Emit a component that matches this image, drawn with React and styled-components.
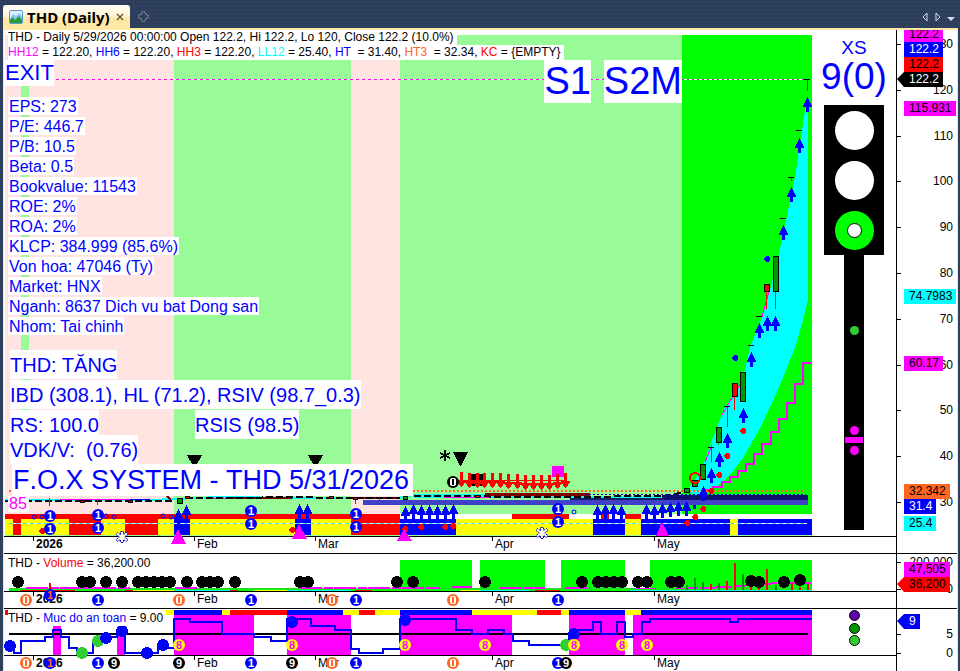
import React from 'react'
import styled, { createGlobalStyle } from 'styled-components';

const GlobalStyle = createGlobalStyle`
    *{
        box-sizing:border-box;
    }
    body{
        margin:0;
        background:#2d3e5c;
        font-family:"Liberation Sans", Arial, sans-serif;
        font-size:12px;
        color:black;
    }
`;

const Window = styled.div`
    display:flex;
    flex-direction:column;
    min-height:100vh;
    background-color:#2d3e5c;
    background-image:radial-gradient(#32445f 1px, transparent 1px);
    background-size:4px 4px;
`;

const TabBar = styled.header`
    display:flex;
    align-items:flex-end;
    justify-content:space-between;
    height:28px;
    padding:0 3px;
`;

const TabGroup = styled.div`
    display:flex;
    align-items:center;
    gap:${p => p.$gap || 0}px;
`;

const Tab = styled.div`
    display:flex;
    align-items:center;
    height:23px;
    padding:0 5px 0 6px;
    border-radius:3px 3px 0 0;
    background:linear-gradient(#fffdf8, #fff3d0 50%, #ffe8a6 52%);
    .name{
        margin-left:4px;
        font:bold 15px/22px "Noto Sans", sans-serif;
    }
`;

const IconButton = styled.button`
    display:flex;
    align-items:center;
    justify-content:center;
    width:13px;
    height:22px;
    padding:0;
    border:0;
    background:none;
    cursor:pointer;
`;

const CloseButton = styled(IconButton)`
    width:10px;
    margin-left:5px;
`;

const Document = styled.main`
    flex:1;
    margin-right:2px;
    margin-left:3px;
    border:solid #ffe8a6;
    border-width:2px 1px 0;
    background:white;
`;

const Pane = styled.section`
    display:grid;
    grid-template-columns:minmax(0, 1fr) 60px;
    border-bottom:${p => p.$last ? 0 : '1px solid black'};
    overflow:hidden;
`;

const PlotColumn = styled.div`
    position:relative;
    border-right:1px solid black;
`;

const PlotRow = styled.div`
    display:grid;
    grid-template-columns:minmax(0, 1fr) 84px;
    height:${p => p.$height}px;
`;

const Drawing = styled.svg`
    position:relative;
    z-index:1;
    display:block;
    width:100%;
    height:100%;
    overflow:visible;
    shape-rendering:crispEdges;
`;

const Side = styled.div`
    display:flex;
    flex-direction:column;
    align-items:center;
    color:blue;
    .rating{
        margin-top:7px;
        font-size:19px;
        line-height:22px;
    }
    .score{
        font-size:37px;
        line-height:36px;
    }
    .light{
        margin-top:10px;
    }
`;

const Months = styled.div`
    display:grid;
    grid-template-columns:161px 121px 177px 162px auto;
    height:17px;
    padding-left:29px;
    border-top:1px solid black;
    line-height:14px;
    span{
        position:relative;
        padding-left:3px;
    }
    span:first-child{
        font-weight:bold;
    }
    span::before{
        content:"";
        position:absolute;
        left:0;
        top:0;
        width:1px;
        height:4px;
        background:black;
    }
`;

const Overlay = styled.div`
    position:absolute;
    z-index:2;
    top:${p => p.$top || 0}px;
    left:4px;
    display:flex;
    flex-direction:column;
    align-items:flex-start;
    color:blue;
    white-space:pre;
`;

const TitleLine = styled.div`
    padding-right:3px;
    background:white;
    color:black;
    line-height:15px;
`;

const Ink = styled.span`
    color:${p => p.$color};
`;

const Exit = styled.div`
    margin-left:-3px;
    background:white;
    font-size:22px;
    line-height:26px;
`;

const Facts = styled.ul`
    display:flex;
    flex-direction:column;
    align-items:flex-start;
    gap:2px;
    margin:11px 0 15px;
    padding:0;
    list-style:none;
    font-size:16px;
    line-height:17px;
    li{
        padding:1px 1px 0;
        background:white;
    }
`;

const Ratings = styled.div`
    display:grid;
    grid-template-columns:185px auto;
    row-gap:1px;
    margin-left:2px;
    font-size:20px;
    line-height:27px;
`;

const Rating = styled.div`
    grid-column:${p => p.$wide ? '1 / 3' : 'auto'};
    justify-self:start;
    margin-top:${p => p.$tight ? -5 : 0}px;
    padding-top:2px;
    background:white;
`;

const SystemName = styled.div`
    margin-left:4px;
    padding:0 4px 0 1px;
    background:white;
    font-size:27px;
    font-kerning:none;
    line-height:32px;
`;

const Rank = styled.div`
    padding:0 2px 0 1px;
    background:white;
    color:magenta;
    font-size:16px;
    line-height:16px;
`;

const Signals = styled.div`
    position:absolute;
    z-index:2;
    top:30px;
    right:214px;
    display:flex;
    gap:13px;
    color:blue;
    font-size:38px;
    line-height:43px;
    span{
        background:white;
    }
`;

const Scale = styled.div`
    position:relative;
`;

const ScaleLabels = styled.div`
    display:flex;
    flex-direction:column;
    justify-content:space-between;
    margin-top:${p => p.$top}px;
    height:${p => p.$height}px;
    padding-right:4px;
    text-align:right;
    line-height:14px;
    span{
        position:relative;
    }
    span::before{
        content:"";
        position:absolute;
        left:0;
        top:7px;
        width:4px;
        height:1px;
        background:black;
    }
`;

const Tag = styled.span`
    position:absolute;
    left:7px;
    height:15px;
    padding:0 4px 0 5px;
    background:${p => p.$bg};
    color:${p => p.$color || 'black'};
    line-height:15px;
    &::before{
        content:"";
        display:${p => p.$pointer ? 'block' : 'none'};
        position:absolute;
        right:100%;
        top:0;
        border:solid transparent;
        border-width:7px 7px 8px 0;
        border-right-color:${p => p.$bg};
    }
`;

const LIME = '#00ff00';
const PALE = '#98fb98';
const PINK = '#ffe4e1';
const GREEN = '#009600';
const LIMEGREEN = '#32cd32';
const ORANGE = '#ff6622';

// [x1, x2, colour]
const backdrop = [
    [5, 174, PINK], [174, 351, PALE], [351, 400, PINK], [400, 682, PALE], [682, 812, LIME],
];
const trendStrip = [[5, 400, 'red'], [400, 512, 'white'], [512, 569, 'red'], [601, 609, 'red'], [625, 641, 'red']];
const phaseStrip = [
    [5, 13, 'yellow'], [13, 21, 'red'], [21, 69, 'yellow'], [69, 101, 'red'], [101, 125, 'yellow'],
    [125, 158, 'red'], [158, 174, 'yellow'], [174, 190, 'blue'], [190, 295, 'yellow'], [295, 311, 'blue'],
    [311, 351, 'yellow'], [351, 400, 'red'], [400, 456, 'blue'], [456, 593, 'yellow'], [593, 625, 'blue'],
    [625, 641, 'yellow'], [641, 730, 'blue'], [730, 738, 'yellow'], [738, 812, 'blue'],
];
const safetyStrip = [
    [5, 8, 'red'], [164, 174, 'yellow'], [174, 222, 'blue'], [222, 230, 'yellow'], [230, 287, 'red'],
    [287, 343, 'blue'], [343, 359, 'yellow'], [359, 375, 'red'], [375, 400, 'yellow'], [400, 472, 'blue'],
    [472, 537, 'yellow'], [537, 561, 'red'], [561, 569, 'yellow'], [569, 625, 'blue'], [625, 641, 'yellow'],
    [641, 812, 'blue'],
];
const safetyZones = [[174, 254, 'magenta'], [287, 351, 'magenta'], [400, 512, 'magenta'], [569, 625, 'magenta'], [633, 812, 'magenta']];
const volumeZones = [[400, 472, LIME], [480, 545, LIME], [561, 625, LIME], [650, 812, LIME]];

// [x, open/close top, bottom, wick bottom, colour]
const candles = [
    [776, 256, 292, 309, GREEN], [767, 284, 292, 309, 'red'], [743, 372, 402, 402, GREEN],
    [735, 383, 397, 410, 'red'], [719, 427, 443, 445, GREEN], [703, 464, 480, 480, GREEN],
    [695, 480, 487, 487, GREEN], [687, 488, 493, 493, GREEN],
];
// [x, y, wick bottom]
const flatBars = [
    [807, 79, 90], [799, 130, 130], [791, 177, 180], [783, 218, 218], [759, 316, 316],
    [751, 345, 345], [727, 406, 426], [711, 447, 461],
];
const buyArrows = [
    [807, 97], [799, 138], [791, 187], [783, 225], [775, 316], [767, 316], [759, 323], [751, 352],
    [743, 408], [727, 433], [719, 452], [711, 468], [703, 486], [605, 504], [613, 504], [621, 505],
    [597, 505], [646, 504], [654, 505], [662, 503], [670, 502], [678, 501], [686, 501],
    [405, 506], [413, 504], [421, 505], [429, 505], [437, 505], [445, 505], [453, 504],
    [178, 509], [186, 505], [299, 504], [307, 504],
];
const sellArrows = [
    [461, 472], [469, 473], [477, 473], [484, 473], [492, 473], [500, 473], [508, 474], [517, 474],
    [525, 475], [533, 475], [541, 475], [549, 475], [557, 474], [565, 473],
];
const warnings = [
    [743, 431], [727, 456], [719, 475], [711, 491], [703, 509], [695, 517], [687, 523],
    [42, 531], [292, 530], [405, 529], [421, 527], [445, 527], [453, 526],
];
const ringDots = [[34, 517], [42, 517], [106, 516], [114, 517], [163, 516], [171, 517]];
const priceOnes = [
    [50, 516], [50, 529], [98, 515], [98, 528], [251, 511], [251, 524], [356, 514], [356, 527],
    [558, 509], [558, 522],
];

const volumeDots = [
    18, 82, 90, 106, 122, 138, 146, 154, 162, 170, 187, 202, 210, 218, 235, 300, 308, 397, 413,
    485, 582, 598, 606, 614, 622, 638, 647, 671, 679,
].map(x => [x, 582]).concat([[751, 581], [759, 582], [784, 582], [800, 580]]);
const volumeBars = [
    [50, 583, 'red'], [687, 585, GREEN], [695, 578, GREEN], [703, 582, GREEN], [711, 584, 'red'],
    [719, 583, GREEN], [727, 581, 'red'], [735, 563, 'red'], [743, 574, GREEN], [751, 587, 'red'],
    [759, 588, 'red'], [767, 569, 'red'], [776, 585, GREEN], [792, 583, 'red'], [800, 587, 'red'],
    [808, 584, 'red'],
];

const safetyLine = 'M10 645H14V653H21V641H45V637H53V630H61V637H69V648H77V653H93V641H98V637H117V630H125V653H158V645H166V648H174V619H190V622H222V634H254V637H271V641H287V619H311V626H335V630H351V649H359V653H383V649H400V619H456V630H472V634H488V630H504V634H513V641H529V645H569V634H577V630H593V622H601V634H617V622H625V637H633V634H642V622H650V619H730V622H738V619H812';

function Strip({ parts, y, height }) {
    return parts.map(([x1, x2, color]) => (
        <rect key={x1} x={x1} y={y} width={x2 - x1} height={height} fill={color} />
    ));
}

function Arrow({ x, y }) {
    return <path d={`M${x} ${y}h1v2h1v2h1v2h1v2h1v2h-3v5h-3v-5h-3v-2h1v-2h1v-2h1v-2h1z`} fill="blue" />;
}

function SellArrow({ x, y }) {
    return <path d={`M${x - 1} ${y}h3v8h3v1l-4 6h-1l-4 -6v-1h3z`} fill="red" />;
}

function Diamond({ x, y, color = 'red' }) {
    return <path d={`M${x - 1} ${y - 3}h2l2 2v2l-2 2h-2l-2 -2v-2z`} fill={color} />;
}

function Badge({ x, y, fill = 'blue', color = 'white', children }) {
    return (
        <g shapeRendering="auto">
            <circle cx={x} cy={y} r="6" fill={fill} />
            <text x={x} y={y + 4} fill={color} fontSize="11" fontWeight="bold" textAnchor="middle">{children}</text>
        </g>
    );
}

function ZeroBadge({ x, y, color = ORANGE }) {
    return (
        <g shapeRendering="auto">
            <circle cx={x} cy={y} r="6" fill={color} />
            <rect x={x - 3} y={y - 4} width="6" height="8" rx="2" fill="white" />
            <rect x={x - 1} y={y - 3} width="2" height="6" fill={color} />
        </g>
    );
}

function Flower({ x, y }) {
    return (
        <g transform={`translate(${x} ${y})`} fill="#fffff0" stroke="#0000d0" strokeWidth="1" strokeDasharray="2 1" shapeRendering="auto">
            <path d="M-1.5 -2.500V-5.500H1.500V-2.500L4.500 -4.500L6 -2.500L3 -0.500V0.500L6 2.500L4.500 4.500L1.500 2.500V5.500H-1.500V2.500L-4.500 4.500L-6 2.500L-3 0.500V-0.500L-6 -2.500L-4.500 -4.500Z" />
        </g>
    );
}

function MonthAxis() {
    return (
        <Months>
            <span>2026</span>
            <span>Feb</span>
            <span>Mar</span>
            <span>Apr</span>
            <span>May</span>
        </Months>
    );
}

function PriceDrawing() {
    return (
        <Drawing aria-label="Price chart">
            <g transform="translate(-4 -30)">
                <Strip parts={backdrop} y={35} height={479} />
                <rect x="21" y="35" width="8" height="461" fill={PALE} />
                <Strip parts={trendStrip} y={514} height={5} />
                <Strip parts={phaseStrip} y={519} height={16} />
                <rect x="5" y="535" width="807" height="1" fill={PALE} />
                <path d="M9 523.5H807" stroke="white" />
                <path d="M9 523.5H807" stroke="#40e0e0" strokeDasharray="4 3" />
                <path d="M56 79.5H808" stroke="white" />
                <path d="M56 79.5H682" stroke="magenta" strokeDasharray="3 3" />
                <path d="M682 79.5H808" stroke="#b04060" strokeDasharray="2 3" />

                <path d="M685 492L695 480L705 460L717 427L725 407L738 387L745 370L750 347L762 317L770 290L782 240L786 220L795 177L802 130L807 98H808V300L803 320L796 345L782 380L772 403L759 430L743 458L730 475L715 488L700 496Z" fill="cyan" />
                <path d="M705 462L712 445M722 415L740 384M762 317L770 288" stroke="magenta" />
                <path d="M705 490H713V487H722V482H730V477H738V471H746V464H754V454H762V444H771V432H779V419H787V403H795V384H803V363H812" fill="none" stroke="magenta" strokeWidth="2" />

                <path d="M5 500H150L174 499L220 497L300 498H400L414 495" fill="none" stroke="cyan" strokeWidth="2" />
                <path d="M414 494H460L590 496H662V498H414Z" fill="cyan" />
                <path d="M60 499.5H150M212 498.5H290M444 497.5H490" stroke="magenta" />
                <path d="M167 496l4 4M230 498H292M363 498H397" stroke="#800000" strokeWidth="2" />
                <rect x="485" y="493" width="105" height="3" fill="#800000" />
                <path d="M5 501H174M186 498.5L300 497L330 498H400M414 496L560 497L662 496L686 492" fill="none" stroke="black" strokeWidth="2" strokeDasharray="7 3" />
                <path d="M5 500.5H16M130 499.5H150" stroke="blue" />
                <path d="M49.5 498V506M97.5 499V505M355.5 498V504M379.5 498V502" stroke="red" />
                {[[80, 500, 'red'], [128, 500, 'red'], [185, 496, 'red'], [329, 496, 'red'], [353, 497, 'red'], [475, 495, 'red']].map(([x, y, c]) => (
                    <rect key={x} x={x + 0.5} y={y + 0.5} width="4" height="2" fill={c} stroke="black" />
                ))}
                <rect x="177" y="498" width="5" height="5" fill={GREEN} stroke="black" />
                <rect x="403" y="496" width="4" height="3" fill={GREEN} stroke="black" />
                <path d="M413 491H806" stroke={ORANGE} strokeWidth="2" strokeDasharray="2 2" />
                <path d="M585 494.5H806" stroke="blue" strokeWidth="1" strokeDasharray="2 2" />
                <rect x="662" y="495" width="146" height="5" fill="#101070" />
                <rect x="570" y="498" width="92" height="2" fill="#102060" />
                <rect x="363" y="500" width="445" height="5" fill="#4040c8" />
                <rect x="9" y="490" width="2" height="2" fill={ORANGE} />

                {flatBars.map(([x, y, low]) => (
                    <g key={x}>
                        <rect x={x} y={y} width="1" height={low - y + 1} fill="red" />
                        <rect x={x - 3} y={y} width="6" height="1" fill="black" />
                    </g>
                ))}
                {candles.map(([x, top, bottom, low, color]) => (
                    <g key={x}>
                        <rect x={x - 1} y={bottom} width="1" height={low - bottom} fill={color} />
                        <rect x={x - 3} y={top} width="6" height={bottom - top} fill="black" />
                        <rect x={x - 2} y={top + 1} width="4" height={bottom - top - 2} fill={color} />
                    </g>
                ))}
                <circle cx="695" cy="478" r="5" fill="none" stroke="red" strokeWidth="2" />
                {buyArrows.map(([x, y]) => <Arrow key={x} x={x} y={y} />)}
                <rect x="693" y="505" width="3" height="4" fill="blue" />
                <Diamond x={767} y={259} color="blue" />
                <Diamond x={735} y={358} color="blue" />
                {warnings.map(([x, y]) => <Diamond key={x} x={x} y={y} />)}
                {ringDots.map(([x, y]) => (
                    <circle key={x} cx={x} cy={y} r="2" fill="red" stroke="blue" shapeRendering="auto" />
                ))}
                <circle cx="574" cy="512" r="2" fill="none" stroke="blue" shapeRendering="auto" />

                <path d="M187 455H202L196 466H193Z M308 455H323L317 466H314Z M453 452H468L461 466H460Z" fill="black" />
                <path d="M445 450v11M440 453l10 5M440 458l10 -5" stroke="black" strokeWidth="2" />
                <rect x="471" y="474" width="12" height="12" fill="black" />
                <rect x="552" y="466" width="12" height="11" fill="magenta" />
                <path d="M461 480H565" stroke="red" />
                {sellArrows.map(([x, y]) => <SellArrow key={x} x={x} y={y} />)}
                <ZeroBadge x={453} y={482} color="black" />

                {priceOnes.map(([x, y]) => <Badge key={`${x}-${y}`} x={x} y={y}>1</Badge>)}
                <path d="M178 529L186 544H171Z M299 524L307 539H292Z M404 529L412 541H397Z M662 522L669 536H656Z" fill="magenta" />
                <Flower x={122} y={537} />
                <Flower x={542} y={533} />
            </g>
        </Drawing>
    );
}

function TrafficLight() {
    return (
        <svg className="light" width="60" height="425" aria-label="Signal light">
            <rect width="60" height="150" fill="black" />
            <rect x="20" y="150" width="20" height="275" fill="black" />
            <circle cx="30.5" cy="25.5" r="19.5" fill="white" />
            <circle cx="30.5" cy="75.5" r="19.5" fill="white" />
            <circle cx="30.5" cy="125.5" r="19.5" fill={LIME} />
            <circle cx="30.5" cy="125.5" r="7" fill="white" stroke="black" />
            <circle cx="30.5" cy="225.5" r="4.5" fill={LIMEGREEN} />
            <circle cx="30.5" cy="325.5" r="4.5" fill="magenta" />
            <rect x="21" y="332" width="18" height="6" fill="magenta" />
            <circle cx="30.5" cy="345.5" r="4.5" fill="magenta" />
        </svg>
    );
}

function VolumeDrawing() {
    return (
        <Drawing aria-label="Volume chart">
            <g transform="translate(-4 -554)">
                <Strip parts={volumeZones} y={560} height={31} />
                <path d="M9 588.5H812" stroke={LIMEGREEN} />
                <path d="M26 588H130M175 588H200M300 588H440M452 587H472M500 588H545M565 588H590M636 589H656M676 589L700 588L730 587L762 584L780 583H812" fill="none" stroke="magenta" strokeWidth="2" strokeDasharray="22 2 9 1" />
                <path d="M9 590H812" stroke={LIME} strokeWidth="2" />
                <path d="M20 590H75M125 590H133M230 590H238M355 590H372M535 590H560" stroke="red" />
                <path d="M133 590H174M254 590H287M460 590H480" stroke="yellow" />
                <path d="M174 590H230M287 590H350M480 590H530M630 590H812" stroke="cyan" />
                {volumeBars.map(([x, y, color]) => (
                    <rect key={x} x={x - 1} y={y} width="2" height={590 - y} fill={color} />
                ))}
                {volumeDots.map(([x, y]) => <circle key={x} cx={x} cy={y} r="6" fill="black" />)}
                {[26, 179, 332, 453].map(x => <ZeroBadge key={x} x={x} y={600} />)}
                {[98, 251, 356, 558].map(x => <Badge key={x} x={x} y={600}>1</Badge>)}
                <Badge x={50} y={595} color={ORANGE}>1</Badge>
            </g>
        </Drawing>
    );
}

function SafetyDrawing() {
    return (
        <Drawing aria-label="Safety chart">
            <g transform="translate(-4 -609)">
                <Strip parts={safetyStrip} y={610} height={5} />
                <Strip parts={safetyZones} y={615} height={40} />
                <rect x="53" y="625" width="8" height="30" fill="magenta" />
                <rect x="117" y="632" width="8" height="23" fill="magenta" />
                <path d="M9 634H808" stroke="black" strokeWidth="2" />
                <path d={safetyLine} fill="none" stroke="#0000f0" strokeWidth="2" />
                {[[82, 653], [98, 641], [566, 645]].map(([x, y]) => (
                    <circle key={x} cx={x} cy={y} r="6" fill={LIMEGREEN} />
                ))}
                {[[10, 646], [106, 638], [122, 631], [147, 653], [163, 645], [292, 622], [405, 620], [574, 634]].map(([x, y]) => (
                    <circle key={x} cx={x} cy={y} r="6" fill="blue" />
                ))}
                {[179, 292, 405, 485, 574, 622, 647].map(x => (
                    <Badge key={x} x={x} y={645} fill="yellow" color="magenta">8</Badge>
                ))}
                {[26, 332, 453].map(x => <ZeroBadge key={x} x={x} y={663} />)}
                {[98, 251, 356, 558].map(x => <Badge key={x} x={x} y={663}>1</Badge>)}
                <Badge x={50} y={663} color={ORANGE}>1</Badge>
                {[114, 179, 292, 566].map(x => <Badge key={x} x={x} y={663} fill="black">9</Badge>)}
            </g>
        </Drawing>
    );
}

function SafetyLights() {
    return (
        <svg width="12" height="40" aria-label="Safety lights">
            <circle cx="6.5" cy="6.5" r="5" fill="#6000a8" stroke="black" />
            <circle cx="6.5" cy="19.5" r="5" fill={GREEN} stroke="black" />
            <circle cx="6.5" cy="31.5" r="5" fill={LIMEGREEN} stroke="black" />
        </svg>
    );
}

const facts = [
    'EPS: 273', 'P/E: 446.7', 'P/B: 10.5', 'Beta: 0.5', 'Bookvalue: 11543', 'ROE: 2%', 'ROA: 2%',
    'KLCP: 384.999 (85.6%)', 'Von hoa: 47046 (Ty)', 'Market: HNX', 'Nganh: 8637 Dich vu bat Dong san',
    'Nhom: Tai chinh',
];

const priceTags = [
    { text: '122.2', top: -3, bg: 'magenta' },
    { text: '122.2', top: 12, bg: 'blue', color: 'white' },
    { text: '122.2', top: 27, bg: 'red' },
    { text: '122.2', top: 42, bg: 'black', color: 'white', pointer: true },
    { text: '115.931', top: 71, bg: 'magenta' },
    { text: '74.7983', top: 259, bg: 'cyan' },
    { text: '60.17', top: 326, bg: 'magenta' },
    { text: '32.342', top: 454, bg: ORANGE },
    { text: '31.4', top: 469, bg: 'blue', color: 'white' },
    { text: '25.4', top: 486, bg: 'cyan' },
];
const volumeTags = [
    { text: '47,505', top: 8, bg: 'magenta' },
    { text: '36,200', top: 23, bg: 'red', pointer: true },
];
const safetyTags = [{ text: '9', top: 5, bg: 'blue', color: 'white', pointer: true }];

function ValueScale({ labels, tags, top, height }) {
    return (
        <Scale>
            <ScaleLabels $top={top} $height={height}>
                {labels.map(label => <span key={label}>{label}</span>)}
            </ScaleLabels>
            {tags.map(tag => (
                <Tag key={tag.top} $bg={tag.bg} $color={tag.color} $pointer={tag.pointer} style={{ top: tag.top }}>
                    {tag.text}
                </Tag>
            ))}
        </Scale>
    );
}

function NavButtons() {
    return (
        <TabGroup>
            <IconButton aria-label="Previous tab">
                <svg width="6" height="10"><path d="M5 1V9L1 5Z" fill="none" stroke="#d6dce6" /></svg>
            </IconButton>
            <IconButton aria-label="Next tab">
                <svg width="6" height="10"><path d="M1 1V9L5 5Z" fill="none" stroke="#d6dce6" /></svg>
            </IconButton>
            <IconButton aria-label="Tab list">
                <svg width="8" height="8"><path d="M0 4H8L4 8Z" fill="#d6dce6" /></svg>
            </IconButton>
        </TabGroup>
    );
}

export default function App() {
    return (
        <Window>
            <GlobalStyle />
            <TabBar>
                <TabGroup $gap={7}>
                    <Tab>
                        <svg width="14" height="14">
                            <rect x="0.5" y="0.5" width="13" height="13" rx="1" fill="#d8efff" stroke="#5a9bd0" />
                            <path d="M1 8L4 4L7 6L10 3L13 6V10H1Z" fill="#8cc8f4" />
                            <path d="M1 13V10L4 7L6 10L8 8L10 6L13 10V13Z" fill="#2e9b3a" />
                        </svg>
                        <span className="name">THD (Daily)</span>
                        <CloseButton aria-label="Close tab">
                            <svg width="8" height="8"><path d="M1 1L7 7M7 1L1 7" stroke="#5c5030" strokeWidth="1.3" /></svg>
                        </CloseButton>
                    </Tab>
                    <IconButton aria-label="New tab">
                        <svg width="13" height="13">
                            <path d="M4.5 3.5Q4.5 1.5 6.5 1.5Q8.5 1.5 8.5 3.5V4.5H9.5Q11.5 4.5 11.5 6.5Q11.5 8.5 9.5 8.5H8.5V9.5Q8.5 11.5 6.5 11.5Q4.5 11.5 4.5 9.5V8.5H3.5Q1.5 8.5 1.5 6.5Q1.5 4.5 3.5 4.5H4.5Z" fill="none" stroke="#8c8c8c" />
                        </svg>
                    </IconButton>
                </TabGroup>
                <NavButtons />
            </TabBar>
            <Document>
                <Pane>
                    <PlotColumn>
                        <Overlay>
                            <TitleLine>THD - Daily 5/29/2026 00:00:00 Open 122.2, Hi 122.2, Lo 120, Close 122.2 (10.0%)</TitleLine>
                            <TitleLine>
                                <Ink $color="magenta">HH12</Ink> = 122.20, <Ink $color="blue">HH6</Ink> = 122.20, <Ink $color="red">HH3</Ink> = 122.20, <Ink $color="cyan">LL12</Ink> = 25.40, <Ink $color="blue">HT</Ink>{'  '}= 31.40, <Ink $color={ORANGE}>HT3</Ink>{'  '}= 32.34, <Ink $color="red">KC</Ink> = {'{EMPTY}'}
                            </TitleLine>
                            <Exit>EXIT</Exit>
                            <Facts>
                                {facts.map(fact => <li key={fact}>{fact}</li>)}
                            </Facts>
                            <Ratings>
                                <Rating $wide>THD: TĂNG</Rating>
                                <Rating $wide>IBD (308.1), HL (71.2), RSIV (98.7_0.3)</Rating>
                                <Rating>RS: 100.0</Rating>
                                <Rating>RSIS (98.5)</Rating>
                                <Rating $wide $tight>VDK/V:{'  '}(0.76)</Rating>
                            </Ratings>
                            <SystemName>F.O.X SYSTEM - THD 5/31/2026</SystemName>
                            <Rank>85</Rank>
                        </Overlay>
                        <Signals>
                            <span>S1</span>
                            <span>S2M</span>
                        </Signals>
                        <PlotRow $height={506}>
                            <PriceDrawing />
                            <Side>
                                <div className="rating">XS</div>
                                <div className="score">9(0)</div>
                                <TrafficLight />
                            </Side>
                        </PlotRow>
                        <MonthAxis />
                    </PlotColumn>
                    <ValueScale
                        labels={['130', '120', '110', '100', '90', '80', '70', '60', '50', '40', '30']}
                        tags={priceTags}
                        top={7}
                        height={472}
                    />
                </Pane>
                <Pane>
                    <PlotColumn>
                        <Overlay $top={2}>
                            <TitleLine>THD - <Ink $color="red">Volume</Ink> = 36,200.00</TitleLine>
                        </Overlay>
                        <PlotRow $height={37}>
                            <VolumeDrawing />
                        </PlotRow>
                        <MonthAxis />
                    </PlotColumn>
                    <ValueScale labels={['200,000', '0']} tags={volumeTags} top={1} height={41} />
                </Pane>
                <Pane $last>
                    <PlotColumn>
                        <Overlay $top={2}>
                            <TitleLine>THD - <Ink $color="blue">Muc do an toan</Ink> = 9.00</TitleLine>
                        </Overlay>
                        <PlotRow $height={46}>
                            <SafetyDrawing />
                            <Side>
                                <SafetyLights />
                            </Side>
                        </PlotRow>
                        <MonthAxis />
                    </PlotColumn>
                    <ValueScale labels={['5', '0']} tags={safetyTags} top={18} height={33} />
                </Pane>
            </Document>
        </Window>
    );
}
